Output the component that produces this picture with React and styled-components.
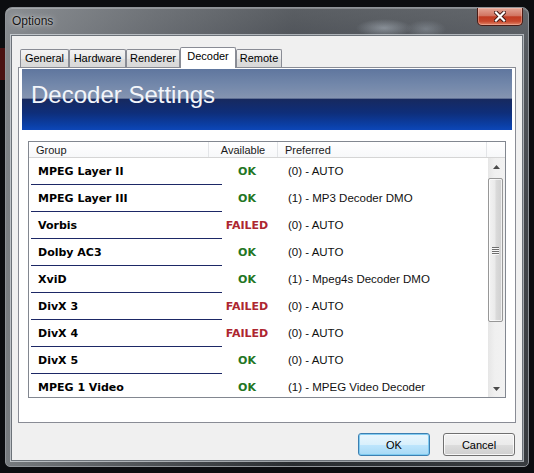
import React from 'react'
import styled, { createGlobalStyle } from 'styled-components'

const rows = [
    { group: 'MPEG Layer II', ok: true, pref: '(0) - AUTO' },
    { group: 'MPEG Layer III', ok: true, pref: '(1) - MP3 Decoder DMO' },
    { group: 'Vorbis', ok: false, pref: '(0) - AUTO' },
    { group: 'Dolby AC3', ok: true, pref: '(0) - AUTO' },
    { group: 'XviD', ok: true, pref: '(1) - Mpeg4s Decoder DMO' },
    { group: 'DivX 3', ok: false, pref: '(0) - AUTO' },
    { group: 'DivX 4', ok: false, pref: '(0) - AUTO' },
    { group: 'DivX 5', ok: true, pref: '(0) - AUTO' },
    { group: 'MPEG 1 Video', ok: true, pref: '(1) - MPEG Video Decoder' },
]

const tabs = [
    { label: 'General', w: 49 },
    { label: 'Hardware', w: 57 },
    { label: 'Renderer', w: 54 },
    { label: 'Decoder', w: 56, active: true },
    { label: 'Remote', w: 46 },
]

function App() {
    return (
        <Screen>
            <GlobalStyle />
            <Window>
                <TitleBar>
                    <Title>Options</Title>
                    <CloseButton title='Close'>
                        <svg width='12' height='11' viewBox='0 0 12 11'>
                            <path d='M2 1.5 L10 9.5 M10 1.5 L2 9.5' stroke='#3a1410' strokeWidth='4' strokeLinecap='square' />
                            <path d='M2 1.5 L10 9.5 M10 1.5 L2 9.5' stroke='#ffffff' strokeWidth='2.2' strokeLinecap='square' />
                        </svg>
                    </CloseButton>
                </TitleBar>
                <Client>
                    <TabStrip>
                        {tabs.map(t => (
                            <Tab key={t.label} $w={t.w} $active={t.active}>{t.label}</Tab>
                        ))}
                    </TabStrip>
                    <Panel>
                        <Banner>Decoder Settings</Banner>
                        <ListBox>
                            <ListHeader>
                                <HeadCell>Group</HeadCell>
                                <HeadCell $center>Available</HeadCell>
                                <HeadCell>Preferred</HeadCell>
                                <HeadCell $last />
                            </ListHeader>
                            <ListBody>
                                <Rows>
                                    {rows.map(r => (
                                        <Row key={r.group}>
                                            <RowCells>
                                                <GroupCell>{r.group}</GroupCell>
                                                <Status $ok={r.ok}>{r.ok ? 'OK' : 'FAILED'}</Status>
                                                <PrefCell>{r.pref}</PrefCell>
                                            </RowCells>
                                            <Rule />
                                        </Row>
                                    ))}
                                </Rows>
                                <ScrollBar>
                                    <Arrow>
                                        <svg width='7' height='4' viewBox='0 0 7 4'><path d='M0 4 L3.5 0 L7 4 Z' fill='#4a4a4a' /></svg>
                                    </Arrow>
                                    <Thumb>
                                        <Grip /><Grip /><Grip /><Grip />
                                    </Thumb>
                                    <Track />
                                    <Arrow>
                                        <svg width='7' height='4' viewBox='0 0 7 4'><path d='M0 0 L7 0 L3.5 4 Z' fill='#4a4a4a' /></svg>
                                    </Arrow>
                                </ScrollBar>
                            </ListBody>
                        </ListBox>
                    </Panel>
                    <ButtonRow>
                        <Button $default>OK</Button>
                        <Button>Cancel</Button>
                    </ButtonRow>
                </Client>
            </Window>
        </Screen>
    )
}

export default App

const GlobalStyle = createGlobalStyle`
    html, body {
        margin: 0;
        padding: 0;
    }
    body {
        width: 534px;
        height: 473px;
        overflow: hidden;
        font-family: "Liberation Sans", Arial, sans-serif;
        background:
            linear-gradient(to bottom, transparent 48px, #4a1212 48px, #4a1212 80px, transparent 80px) 0 0 / 5px 100% no-repeat,
            #0c0d10;
    }
`

const Screen = styled.div`
        padding: 7px 5px 0;
`

const Window = styled.div`
        box-sizing: border-box;
        width: 524px;
        height: 460px;
        border: 1px solid #8f9398;
        border-radius: 7px 7px 5px 5px;
        display: flex;
        flex-direction: column;
        background:
            radial-gradient(ellipse 28px 9px at 378px 20px, rgba(185,195,205,.5), transparent),
            radial-gradient(ellipse 20px 9px at 420px 21px, rgba(165,175,185,.4), transparent),
            linear-gradient(to right, rgba(150,154,158,.75) 0%, rgba(120,124,129,.55) 28%, rgba(70,74,79,.35) 55%, rgba(95,99,104,.45) 100%),
            linear-gradient(to bottom, #666a6f 0px, #50545a 40px, #2d3034 200px, #181b1e 100%);
        box-shadow: inset 0 1px 0 rgba(255,255,255,.25);
`

const TitleBar = styled.div`
        height: 27px;
        display: flex;
        align-items: flex-start;
        justify-content: space-between;
        padding: 0 5px 0 6px;
`

const Title = styled.div`
        font-size: 12px;
        line-height: 27px;
        color: #151515;
        text-shadow: 0 0 6px rgba(255,255,255,.75), 0 0 2px rgba(255,255,255,.5);
`

const CloseButton = styled.div`
        box-sizing: border-box;
        width: 46px;
        height: 18px;
        display: flex;
        align-items: center;
        justify-content: center;
        border: 1px solid #4a1c16;
        border-top: none;
        border-radius: 0 0 5px 5px;
        background: linear-gradient(to bottom, #e4a596 0%, #d27562 45%, #c13b22 52%, #c8472c 78%, #e2866a 100%);
        box-shadow: inset 0 0 0 1px rgba(255,220,210,.35);
`

const Client = styled.div`
        flex: 1;
        margin: 0 5px 5px;
        box-sizing: border-box;
        display: flex;
        flex-direction: column;
        padding: 11px 6px 0;
        background: #f0f0f0;
        border: 1px solid #6c7279;
        box-shadow: 0 0 0 1px rgba(235,240,245,.6);
`

const TabStrip = styled.div`
        height: 20px;
        display: flex;
        align-items: flex-end;
        padding-left: 2px;
`

const Tab = styled.div`
        position: relative;
        z-index: ${p => (p.$active ? 1 : 0)};
        box-sizing: border-box;
        width: ${p => p.$w}px;
        height: ${p => (p.$active ? 21 : 18)}px;
        margin-bottom: ${p => (p.$active ? -1 : 0)}px;
        border: 1px solid #898c95;
        border-bottom: none;
        border-radius: 2px 2px 0 0;
        background: ${p => (p.$active ? '#ffffff' : 'linear-gradient(to bottom, #f4f4f4 0%, #e9e9e9 50%, #dedede 52%, #d8d8d8 100%)')};
        font-size: 11px;
        line-height: 16px;
        text-align: center;
        color: #000;
`

const Panel = styled.div`
        box-sizing: border-box;
        height: 356px;
        display: flex;
        flex-direction: column;
        padding: 1px 3px;
        background: #fff;
        border: 1px solid #898c95;
`

const Banner = styled.div`
        box-sizing: border-box;
        height: 61px;
        padding: 14px 0 0 9px;
        font-size: 24px;
        line-height: 24px;
        color: #f2f5fa;
        background: linear-gradient(to bottom, #5f769e 0%, #7287aa 25%, #8393b0 46%, #8796b2 48%, #17295e 49%, #0e2e7a 72%, #0b3fa6 92%, #0d47b8 100%);
`

const ListBox = styled.div`
        box-sizing: border-box;
        height: 257px;
        margin: 11px 6px 0;
        display: flex;
        flex-direction: column;
        border: 1px solid #828790;
        background: #fff;
`

const ListHeader = styled.div`
        box-sizing: border-box;
        height: 16px;
        display: grid;
        grid-template-columns: 180px 69px 209px 1fr;
        border-bottom: 1px solid #d5d5d5;
        background: linear-gradient(to bottom, #ffffff, #f7f8fa);
`

const HeadCell = styled.div`
        box-sizing: border-box;
        padding: 2px 0 0 ${p => (p.$center ? 0 : 7)}px;
        text-align: ${p => (p.$center ? 'center' : 'left')};
        border-right: ${p => (p.$last ? 'none' : '1px solid #e3e5e8')};
        font-size: 11px;
        line-height: 13px;
        color: #1a1a1a;
`

const ListBody = styled.div`
        flex: 1;
        display: flex;
        overflow: hidden;
`

const Rows = styled.div`
        flex: 1;
        overflow: hidden;
`

const Row = styled.div`
        padding-left: 2px;
`

const RowCells = styled.div`
        height: 26px;
        display: grid;
        grid-template-columns: 178px 69px 1fr;
        align-items: center;
`

const GroupCell = styled.div`
        padding-left: 7px;
        font-family: "DejaVu Sans", Verdana, sans-serif;
        font-weight: bold;
        font-size: 11px;
        color: #000;
`

const Status = styled.div`
        text-align: center;
        padding-left: 7px;
        font-family: "DejaVu Sans", Verdana, sans-serif;
        font-weight: bold;
        font-size: 11px;
        color: ${p => (p.$ok ? '#237523' : '#ad2630')};
`

const PrefCell = styled.div`
        padding-left: 10px;
        font-size: 11.5px;
        color: #111;
        white-space: nowrap;
`

const Rule = styled.div`
        width: 191px;
        height: 1px;
        background: #1d2866;
`

const ScrollBar = styled.div`
        width: 17px;
        display: flex;
        flex-direction: column;
        background: linear-gradient(to right, #e6e6e6, #f0f0f0 40%, #f2f2f2);
`

const Arrow = styled.div`
        height: 17px;
        display: flex;
        align-items: center;
        justify-content: center;
`

const Thumb = styled.div`
        box-sizing: border-box;
        height: 144px;
        margin: 3px 2px 0 0;
        display: flex;
        flex-direction: column;
        align-items: center;
        justify-content: center;
        gap: 1px;
        border: 1px solid #979797;
        border-radius: 2px;
        background: linear-gradient(to right, #f3f3f3 0%, #eaeaea 45%, #dadada 55%, #cfcfcf 100%);
        box-shadow: inset 0 0 0 1px rgba(255,255,255,.7);
`

const Grip = styled.div`
        width: 7px;
        height: 1px;
        background: #6e6e6e;
        box-shadow: 0 1px 0 #f8f8f8;
`

const Track = styled.div`
        flex: 1;
`

const ButtonRow = styled.div`
        display: flex;
        justify-content: flex-end;
        gap: 13px;
        margin-top: 10px;
        padding-right: 1px;
`

const Button = styled.div`
        box-sizing: border-box;
        width: 72px;
        height: 23px;
        display: flex;
        align-items: center;
        justify-content: center;
        font-size: 11px;
        color: #000;
        border: 1px solid ${p => (p.$default ? '#3c7fb1' : '#707070')};
        border-radius: 3px;
        background: ${p => (p.$default
            ? 'linear-gradient(to bottom, #eaf6fd 0%, #d9f0fc 50%, #bee6fd 51%, #a7d9f5 100%)'
            : 'linear-gradient(to bottom, #f2f2f2 0%, #ebebeb 50%, #dddddd 51%, #cfcfcf 100%)')};
        box-shadow: inset 0 0 0 1px ${p => (p.$default ? 'rgba(120,200,240,.9)' : 'rgba(255,255,255,.8)')};
`
